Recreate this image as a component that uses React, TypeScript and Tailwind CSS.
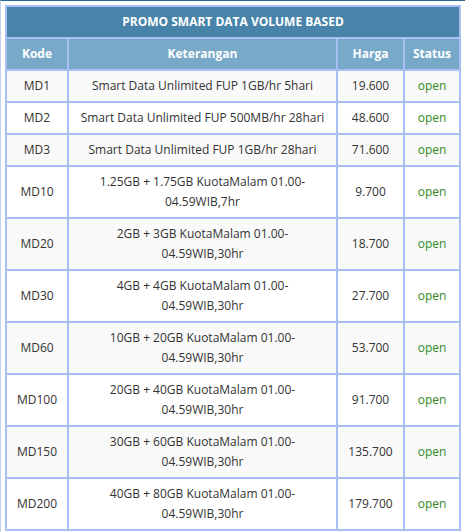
import React from "react";

const rows: { k: string; d: React.ReactNode; h: string }[] = [
  { k: "MD1", d: "Smart Data Unlimited FUP 1GB/hr 5hari", h: "19.600" },
  { k: "MD2", d: "Smart Data Unlimited FUP 500MB/hr 28hari", h: "48.600" },
  { k: "MD3", d: "Smart Data Unlimited FUP 1GB/hr 28hari", h: "71.600" },
  { k: "MD10", d: <>1.25GB + 1.75GB KuotaMalam 01.00-<br />04.59WIB,7hr</>, h: "9.700" },
  { k: "MD20", d: <>2GB + 3GB KuotaMalam 01.00-<br />04.59WIB,30hr</>, h: "18.700" },
  { k: "MD30", d: <>4GB + 4GB KuotaMalam 01.00-<br />04.59WIB,30hr</>, h: "27.700" },
  { k: "MD60", d: <>10GB + 20GB KuotaMalam 01.00-<br />04.59WIB,30hr</>, h: "53.700" },
  { k: "MD100", d: <>20GB + 40GB KuotaMalam 01.00-<br />04.59WIB,30hr</>, h: "91.700" },
  { k: "MD150", d: <>30GB + 60GB KuotaMalam 01.00-<br />04.59WIB,30hr</>, h: "135.700" },
  { k: "MD200", d: <>40GB + 80GB KuotaMalam 01.00-<br />04.59WIB,30hr</>, h: "179.700" },
];

const cell = "border border-[#a9bff2] px-[2px] py-[5px] text-center align-middle whitespace-nowrap";

export default function App() {
  return (
    <div
      className="w-[465px] h-[532px] bg-white border-t border-t-[#2d6592] border-l border-l-[#c3d0e6] pt-[4px] pl-[4px] overflow-hidden"
      style={{ fontFamily: '"Open Sans", "Noto Sans", sans-serif' }}
    >
      <table className="border-separate border-spacing-0 border border-[#a9bff2] w-[456px] table-fixed text-[12px] leading-[20px] text-[#333]">
        <colgroup>
          <col className="w-[62px]" />
          <col className="w-[269px]" />
          <col className="w-[67px]" />
          <col className="w-[56px]" />
        </colgroup>
        <thead>
          <tr>
            <th colSpan={4} className={`${cell} bg-[#4884a9] text-white font-bold`}>
              PROMO SMART DATA VOLUME BASED
            </th>
          </tr>
          <tr>
            <th className={`${cell} bg-[#79a9c9] text-white font-bold`}>Kode</th>
            <th className={`${cell} bg-[#79a9c9] text-white font-bold`}>Keterangan</th>
            <th className={`${cell} bg-[#79a9c9] text-white font-bold`}>Harga</th>
            <th className={`${cell} bg-[#79a9c9] text-white font-bold`}>Status</th>
          </tr>
        </thead>
        <tbody>
          {rows.map((r, i) => (
            <tr key={r.k} className={i % 2 === 0 ? "bg-[#f9f9f9]" : "bg-white"}>
              <td className={cell}>{r.k}</td>
              <td className={cell}>{r.d}</td>
              <td className={cell}>{r.h}</td>
              <td className={`${cell} text-[#2e8a1e]`}>open</td>
            </tr>
          ))}
        </tbody>
      </table>
    </div>
  );
}
